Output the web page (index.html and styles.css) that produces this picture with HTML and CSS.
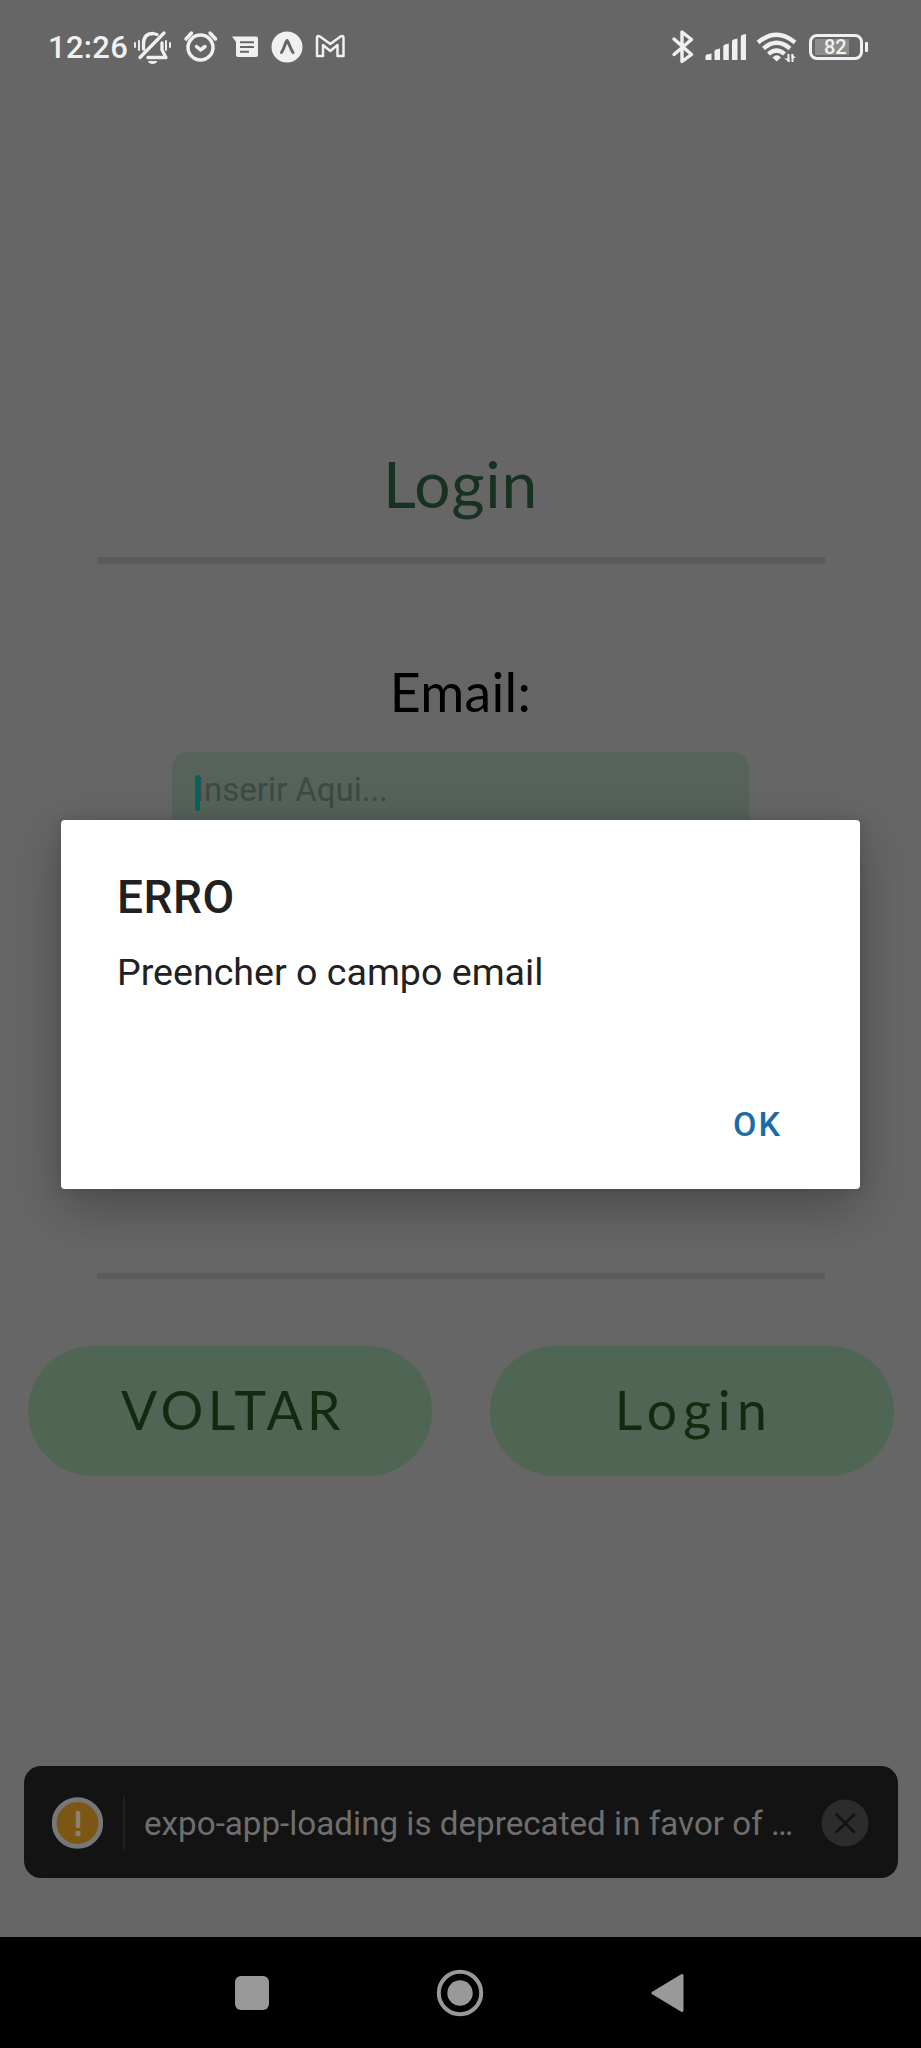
FILE: index.html
```html
<!DOCTYPE html>
<html lang="pt">
<head>
<meta charset="utf-8">
<title>Login</title>
<link rel="stylesheet" href="styles.css">
</head>
<body>
<div class="screen">
  <header class="status">
    <div class="status-left">
      <span class="time">12:26</span>
      <svg class="icon" width="40" height="40" viewBox="133 28 40 40" fill="none" stroke="#f0f0f0" stroke-width="3.300" stroke-linecap="round" stroke-linejoin="round">
        <path d="M140 57.500L164 33M143.500 49V44C143.500 37 147 33.500 153 33.500L157 34.500M162 43V50L166 57.500H148"/>
        <path d="M148 61H157.500C156 65 149 65 148 61Z" fill="#f0f0f0" stroke="none"/>
        <path d="M135 43V47M139 41V50M166 41V50M170 43V47" stroke-width="1.900"/>
      </svg>
      <svg class="icon icon-alarm" width="36" height="40" viewBox="183 28 36 40" fill="none" stroke="#f0f0f0" stroke-width="3.500" stroke-linecap="round" stroke-linejoin="round">
        <circle cx="200.500" cy="47.500" r="12.500"/><path d="M186 39L191.500 33M215.500 39L210 33M196.500 46.500L200.500 50L205 46.500"/>
      </svg>
      <svg class="icon icon-message" width="28" height="40" viewBox="231 28 28 40">
        <path d="M232 36.500H256Q258 36.500 258 38.500V55Q258 57 256 57H238Q236 57 236 55V42Z" fill="#f0f0f0"/>
        <path d="M240 42.200H254M240 47H254M240 51.700H249" stroke="#666" stroke-width="2"/>
      </svg>
      <svg class="icon icon-expo" width="32" height="40" viewBox="271 28 32 40">
        <circle cx="287" cy="47" r="15.500" fill="#f0f0f0"/>
        <path d="M281.500 52.500C284 49 285 43 287 40.500C289 43 290.500 49 293 52.500" fill="none" stroke="#666" stroke-width="3" stroke-linecap="round" stroke-linejoin="round"/>
      </svg>
      <svg class="icon icon-mail" width="32" height="40" viewBox="314 28 32 40" fill="none" stroke="#f0f0f0" stroke-width="2.500" stroke-linejoin="round">
        <path d="M317 38Q317 35 320 36.500L330.300 44L340.500 36.500Q343.500 35 343.500 38V56H337.500V45L330.300 51L323 45V56H317Z"/>
      </svg>
    </div>
    <div class="status-right">
      <svg class="icon" width="24" height="40" viewBox="671 28 24 40" fill="none" stroke="#f0f0f0" stroke-width="3.400" stroke-linejoin="round" stroke-linecap="round">
        <path d="M674 39L691.500 54.500L682 61.500V32L691.500 39.500L674 54.500"/>
      </svg>
      <svg class="icon icon-signal" width="44" height="40" viewBox="704 28 44 40" fill="#f0f0f0">
        <path d="M705.500 56Q705.500 54.500 707 54.500L711.500 53.500V60H705.500ZM714.500 51.500Q714.500 50 716 49.500L720 48.500V60H714.500ZM723.300 46.500Q723.300 45 725 44.500L728.800 43.500V60H723.300ZM732 41.500Q732 40 733.500 39.500L737.500 38.500V60H732ZM740.800 37Q740.800 35 742.500 34.700L746 34V60H740.800Z"/>
      </svg>
      <svg class="icon icon-wifi" width="42" height="40" viewBox="756 28 42 40" fill="none" stroke="#f0f0f0" stroke-width="4.300">
        <path d="M758 42.500Q776.500 27 795 42.500M763.500 48.500Q776.500 37 790 48.500M768.500 54Q776.500 47 784.500 54"/>
        <path d="M772.500 57.500Q776.700 53 781 57.500L776.700 61.500Z" fill="#f0f0f0" stroke="none"/>
        <path d="M788.500 54V62M792.500 54V62" stroke-width="2"/><path d="M784 58.500H789.500V62ZM791.500 54L796 58H791.500Z" fill="#f0f0f0" stroke="none"/>
      </svg>
      <div class="battery"><span class="battery-level">82</span></div>
      <i class="battery-tip"></i>
    </div>
  </header>

  <main class="form">
    <h1 class="title">Login</h1>
    <div class="rule"></div>
    <label class="label">Email:</label>
    <div class="input"><span class="placeholder">Inserir Aqui...</span><i class="caret"></i></div>
    <div class="rule rule-bottom"></div>
    <div class="actions">
      <div class="button voltar">VOLTAR</div>
      <div class="button entrar">Login</div>
    </div>
  </main>

  <div class="toast">
    <svg class="warning" width="51" height="52" viewBox="0 0 51 52"><circle cx="25.500" cy="26" r="23.300" fill="#7c5714" stroke="#777" stroke-width="4.800"/><path d="M26 16V29" stroke="#8c8172" stroke-width="4.500" stroke-linecap="round"/><circle cx="26" cy="36.500" r="2.700" fill="#8c8172"/></svg>
    <i class="divider"></i>
    <span class="toast-text">expo-app-loading is deprecated in favor of …</span>
    <svg class="close" width="48" height="48" viewBox="0 0 48 48"><circle cx="24" cy="24" r="23.500" fill="#2c2c2c"/><path d="M15.500 15.500L33 33M33 15.500L15.500 33" stroke="#121212" stroke-width="2.600" stroke-linecap="round"/></svg>
  </div>

  <nav class="nav">
    <svg width="34" height="34" viewBox="0 0 34 34"><rect width="34" height="34" rx="6" fill="#999"/></svg>
    <svg width="48" height="48" viewBox="0 0 48 48"><circle cx="24" cy="24" r="21.200" fill="none" stroke="#999" stroke-width="4"/><circle cx="24" cy="24" r="12.700" fill="#999"/></svg>
    <svg width="34" height="40" viewBox="0 0 34 40"><path d="M2 20L31 2.500V37.500Z" fill="#999" stroke="#999" stroke-width="3" stroke-linejoin="round"/></svg>
  </nav>

  <section class="dialog">
    <h2 class="dialog-title">ERRO</h2>
    <p class="dialog-text">Preencher o campo email</p>
    <div class="dialog-ok">OK</div>
  </section>
</div>
</body>
</html>
```

FILE: styles.css
```css
* { box-sizing: border-box; }
body { margin: 0; background: #666; font-family: Roboto, sans-serif; }
.screen { position: relative; width: 921px; height: 2048px; overflow: hidden; display: flex; flex-direction: column; background: #666; }
h1, h2, p { margin: 0; font-weight: 400; }
svg { display: block; flex: none; }

.status { display: flex; justify-content: space-between; height: 94px; padding: 28px 53px 0 48px; }
.status-left, .status-right { display: flex; height: 40px; color: #f0f0f0; }
.time { width: 85px; font-size: 31px; line-height: 40px; font-weight: 500; letter-spacing: .3px; white-space: nowrap; }
.icon-alarm { margin-left: 10px; }
.icon-message { margin-left: 12px; }
.icon-expo { margin-left: 12px; }
.icon-mail { margin-left: 11px; }
.icon-signal { margin-left: 9px; }
.icon-wifi { margin-left: 8px; }
.battery { width: 54px; height: 26px; margin: 6px 0 0 11px; border: 3px solid #f0f0f0; border-radius: 8px; padding: 2px 3px; display: flex; }
.battery-level { width: 34px; height: 16px; padding-left: 9px; background: #8c8c8c; font-size: 20px; line-height: 17px; font-weight: 500; }
.battery-tip { width: 3px; height: 10px; margin: 14px 0 0 2px; border-radius: 1px; background: #f0f0f0; }

.form { display: flex; flex-direction: column; align-items: center; font-family: Lato, sans-serif; }
.title { height: 80px; margin-top: 350px; font-size: 64px; line-height: 79px; letter-spacing: .8px; color: #173222; }
.rule { width: 728px; height: 7px; margin-top: 33px; background: #5b5b5b; }
.label { height: 70px; margin-top: 92px; font-size: 53.500px; line-height: 70px; letter-spacing: .3px; color: #000; }
.input { position: relative; width: 577px; height: 104px; margin-top: 26px; padding: 16px 0 0 23px; border-radius: 16px; background: #56625a; font-family: Roboto, sans-serif; }
.placeholder { display: block; font-size: 33px; line-height: 44px; color: #3d4a43; }
.caret { position: absolute; left: 23px; top: 23px; width: 5px; height: 36px; border-radius: 2px; background: #00665c; }
.rule-bottom { height: 6px; margin-top: 417px; }
.actions { display: flex; justify-content: center; gap: 58px; margin-top: 67px; }
.button { width: 404px; height: 130px; border-radius: 65px; background: #4e6653; color: #122b10; text-align: center; font-size: 53.500px; line-height: 127px; }
.voltar { padding-left: 7px; letter-spacing: 4.300px; }
.entrar { padding-left: 5px; letter-spacing: 6.500px; }

.toast { display: flex; align-items: center; width: 874px; height: 112px; margin: 290px 0 0 24px; padding: 0 28px; border-radius: 17px; background: #131313; }
.warning { margin-top: 2px; }
.divider { width: 2px; height: 52px; margin: 2px 0 0 20px; background: #222; }
.toast-text { width: 656px; margin-left: 19px; padding-top: 3px; font-size: 33.200px; line-height: 44px; white-space: nowrap; color: #6e6e6e; }
.close { margin: 2px 0 0 21px; }

.nav { display: flex; align-items: center; justify-content: space-between; height: 111px; margin-top: 59px; padding: 0 236px 0 235px; background: #000; }

.dialog { position: absolute; left: 61px; top: 820px; width: 799px; height: 369px; padding: 48px 59px 0 56px; border-radius: 4px; background: #fff; box-shadow: 0 18px 50px rgba(0,0,0,.27), 0 0 12px rgba(0,0,0,.12); color: #212121; display: flex; flex-direction: column; }
.dialog-title { font-size: 46px; line-height: 58px; font-weight: 500; letter-spacing: .5px; }
.dialog-text { margin-top: 21px; font-size: 37.600px; line-height: 50px; }
.dialog-ok { align-self: flex-end; margin: 105px 19px 0 0; font-size: 34px; line-height: 44px; font-weight: 500; letter-spacing: 2px; color: #1a6ca8; }
```
